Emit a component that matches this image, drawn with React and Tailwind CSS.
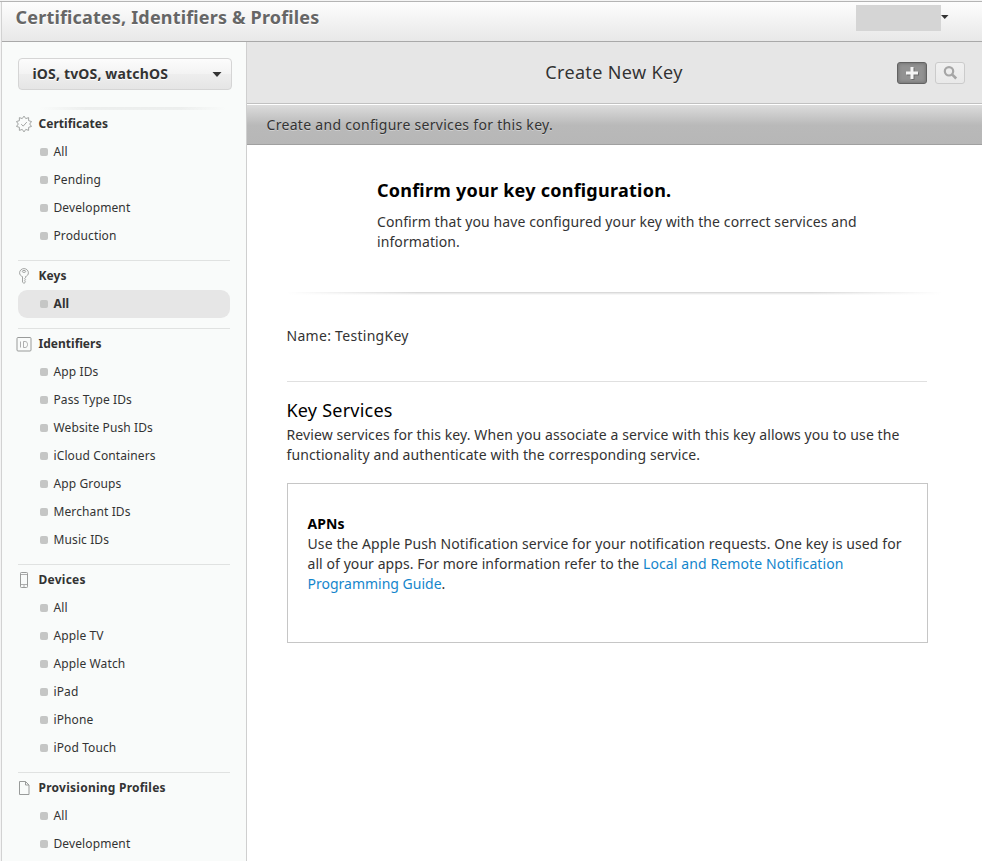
const sections = [
  { title: "Certificates", icon: "seal", tracking: "tracking-[0.040px]", items: ["All", "Pending", "Development", "Production"] },
  { title: "Keys", icon: "key", tracking: "tracking-[0.100px]", items: ["All"], selected: 0 },
  {
    title: "Identifiers",
    icon: "id",
    tracking: "tracking-[0.020px]",
    items: ["App IDs", "Pass Type IDs", "Website Push IDs", "iCloud Containers", "App Groups", "Merchant IDs", "Music IDs"],
  },
  { title: "Devices", icon: "device", tracking: "tracking-[0.250px]", items: ["All", "Apple TV", "Apple Watch", "iPad", "iPhone", "iPod Touch"] },
  { title: "Provisioning Profiles", icon: "file", tracking: "tracking-[0.250px]", items: ["All", "Development"] },
];

// Outline of the certificate seal: ten outward points with deep notches.
const sealPoints = Array.from({ length: 20 }, (_, i) => {
  const r = i % 2 === 0 ? 7.9 : 5.7;
  const a = (i * Math.PI) / 10;
  return `${(8 + r * Math.sin(a)).toFixed(2)},${(8 - r * Math.cos(a)).toFixed(2)}`;
}).join(" ");

function SectionIcon({ name }) {
  return (
    <svg className="size-4 shrink-0" viewBox="0 0 16 16" fill="none" stroke="#999b9a" strokeWidth="1">
      {name === "seal" && (
        <>
          <polygon points={sealPoints} strokeWidth="0.9" strokeLinejoin="round" />
          <path d="M5.2 8.2l2 1.9 3.6-4" strokeWidth="0.9" />
        </>
      )}
      {name === "key" && (
        <>
          <path d="M6.5 8.6C4.6 8 3.6 6.5 3.6 4.8a4.4 4.2 0 0 1 8.8 0c0 1.7-1 3.2-2.9 3.8v1.2l-1 1 1 1-1 1 .9 1-1.4 1.7-1.5-1.5z" strokeWidth="0.9" />
          <ellipse cx="8" cy="3.4" rx="1.7" ry="1" strokeWidth="0.9" />
        </>
      )}
      {name === "id" && (
        <>
          <rect x="1" y="1.5" width="14" height="13.5" rx="1" />
          <path d="M4.500 5.500v6M7.500 5.500v6h1.700c1.500 0 2.300-1.200 2.300-3s-.8-3-2.300-3z" strokeWidth="0.8" />
        </>
      )}
      {name === "device" && (
        <>
          <rect x="4.5" y="0.5" width="7" height="15" rx="0.8" />
          <path d="M4.5 2.500h7M4.5 12.500h7M7 14h2" strokeWidth="0.8" />
        </>
      )}
      {name === "file" && <path d="M3.5 1.500h6l3.500 3.500v9.500h-9.500zM9.500 1.500v3.500h3.500" />}
    </svg>
  );
}

function Section({ section, first }) {
  return (
    <section className={first ? "" : "mt-2.5 border-t border-[#e0e2e1] pt-px"}>
      <h3 className={`flex h-7 items-center gap-[6.500px] text-[12px] font-bold leading-7 text-[#333] ${section.tracking}`}>
        <span className="-ml-0.5">
          <SectionIcon name={section.icon} />
        </span>
        <span>{section.title}</span>
      </h3>
      <ul>
        {section.items.map((item, i) => (
          <li
            key={item}
            className={`flex h-7 items-center gap-[5.500px] rounded-[9px] pl-[22px] text-[12px] leading-7 tracking-[0.110px] text-[#333] ${
              section.selected === i ? "bg-[#e6e6e6] font-bold" : ""
            }`}
          >
            <span className="size-2 rounded-[2px] bg-[#c5c6c5]" />
            <span>{item}</span>
          </li>
        ))}
      </ul>
    </section>
  );
}

export default function App() {
  return (
    <div className="flex h-[861px] w-[982px] flex-col overflow-hidden bg-[#f4f4f4] pt-px font-['Noto_Sans','Open_Sans',sans-serif] whitespace-nowrap [font-feature-settings:'liga']">
      <div className="flex min-h-0 grow flex-col border-t border-[#b4b4b4]">
        <div className="ml-px flex min-h-0 grow flex-col border-l border-[#d2d2d2]">
          <header className="flex h-10 shrink-0 items-start border-b border-[#a9a9a9] bg-linear-to-b from-[#fdfdfd] to-[#e8e8e8] pl-[13.500px]">
            <h1 className="mt-[3px] grow text-[18px] font-bold leading-6 tracking-[0.180px] text-[#666] [text-shadow:0_1px_0_#fff]">
              Certificates, Identifiers &amp; Profiles
            </h1>
            <div className="mt-[3px] h-[26px] w-[85px] bg-[#d5d5d5]" />
            <svg className="mt-[13px] mr-[33px] h-1 w-[8px]" viewBox="0 0 8 4">
              <path d="M0 0h7.500L3.750 4z" fill="#333" />
            </svg>
          </header>

          <div className="flex min-h-0 grow">
            <aside className="w-[245px] shrink-0 overflow-hidden border-r border-[#cfcfcf] bg-[#f9fbfa] px-4 pt-4">
              <button className="flex h-8 w-[214px] items-center justify-between rounded-[4px] border border-[#d5d5d5] bg-[linear-gradient(#fcfcfc,#f3f3f3_50%,#eeeeee_50%,#e5e5e5)] pl-[13.500px] pr-[9.500px] text-[14px] font-bold leading-[30px] tracking-[0.160px] text-[#333] [text-shadow:0_1px_0_#fff]">
                <span>iOS, tvOS, watchOS</span>
                <svg className="h-[5px] w-[10px]" viewBox="0 0 10 5">
                  <path d="M0.500 0h9L5 5z" fill="#333" />
                </svg>
              </button>
              <div className="mt-[17px] ml-[22px] h-[3px] w-[186px] bg-[linear-gradient(90deg,#f9fbfa,transparent_25%,transparent_75%,#f9fbfa),linear-gradient(#eceeed,#eef0ef)]" />
              <nav className="w-[212px]">
                {sections.map((s, i) => (
                  <Section key={s.title} section={s} first={i === 0} />
                ))}
              </nav>
            </aside>

            <main className="flex min-w-0 grow flex-col bg-white">
              <div className="grid h-[62px] shrink-0 grid-cols-[1fr_auto_1fr] items-center border-b border-[#c1c1c1] bg-[#e6e6e6]">
                <h2 className="col-start-2 mr-px mb-0.5 text-[18px] leading-6 tracking-[0.370px] text-[#333] [text-shadow:0_1px_0_#f4f4f4]">
                  Create New Key
                </h2>
                <div className="mr-[17px] flex justify-end gap-2">
                  <button className="flex h-[22px] w-[30px] items-center justify-center rounded-[3px] border border-[#626262] bg-[#929292] shadow-[inset_0_0_3px_1px_#777]">
                    <svg className="size-4" viewBox="0 0 16 16">
                      <path d="M7.500 3h3v4.500h4.500v3h-4.500v4.500h-3v-4.500h-4.500v-3h4.500z" fill="#6d6d6d" />
                      <path d="M6.500 2h3v4.500h4.500v3h-4.500v4.500h-3v-4.500h-4.500v-3h4.500z" fill="#f5f5f5" />
                    </svg>
                  </button>
                  <button className="flex h-[22px] w-[30px] items-center justify-center rounded-[3px] border border-[#cbcbcb] bg-linear-to-b from-[#f0f0f0] to-[#e9e9e9]">
                    <svg className="size-4" viewBox="0 0 16 16" fill="none" stroke="#a6a6a6">
                      <circle cx="7" cy="6.300" r="4.200" strokeWidth="2.200" />
                      <path d="M10 9.300l4.200 4.200" strokeWidth="2.600" />
                    </svg>
                  </button>
                </div>
              </div>
              <div className="h-[41px] shrink-0 border-t border-b border-[#a0a0a0] border-t-white bg-[linear-gradient(#dcdcdc,#b9b9b9_52%,#b7b7b7)] pl-[19.500px]">
                <p className="mt-[10px] text-[14px] leading-5 tracking-[0.300px] text-[#333] [text-shadow:0_1px_0_#d0d0d0]">
                  Create and configure services for this key.
                </p>
              </div>

              <div className="pl-[39.500px] text-[14px] leading-5 tracking-[0.100px] text-[#333]">
                <div className="pt-[33px] pl-[90.500px]">
                  <h2 className="text-[18px] font-bold leading-6 tracking-[0.260px] text-black">Confirm your key configuration.</h2>
                  <p className="mt-2.5 tracking-[0.095px]">
                    Confirm that you have configured your key with the correct services and
                    <br />
                    information.
                  </p>
                </div>
                <div className="mt-10 h-[3px] w-[655px] bg-[linear-gradient(90deg,#fff,transparent_20%,transparent_80%,#fff),linear-gradient(#dadada_33%,#eaeaea_34%,#eaeaea_66%,#f7f7f7_67%)]" />
                <p className="mt-[31px] tracking-[0.290px]">Name: TestingKey</p>
                <div className="mt-[35px] ml-[0.500px] h-px w-[640px] bg-[#e0e0e0]" />
                <h2 className="mt-4 text-[18px] leading-6 tracking-[0.220px] text-black">Key Services</h2>
                <p className="mt-[3px]">
                  Review services for this key. When you associate a service with this key allows you to use the
                  <br />
                  functionality and authenticate with the corresponding service.
                </p>
                <div className="mt-[18px] ml-[0.500px] h-[160px] w-[641px] border border-[#c6c6c6] pt-[30px] pl-[19.500px]">
                  <h3 className="font-bold text-black">APNs</h3>
                  <p>
                    Use the Apple Push Notification service for your notification requests. One key is used for
                    <br />
                    <span className="tracking-[0.070px]">all of your apps. For more information refer to the </span>
                    <a className="text-[#1486cc]">
                      Local and Remote Notification
                      <br />
                      <span className="tracking-[0px]">Programming Guide</span>
                    </a>
                    .
                  </p>
                </div>
              </div>
            </main>
          </div>
        </div>
      </div>
    </div>
  );
}
